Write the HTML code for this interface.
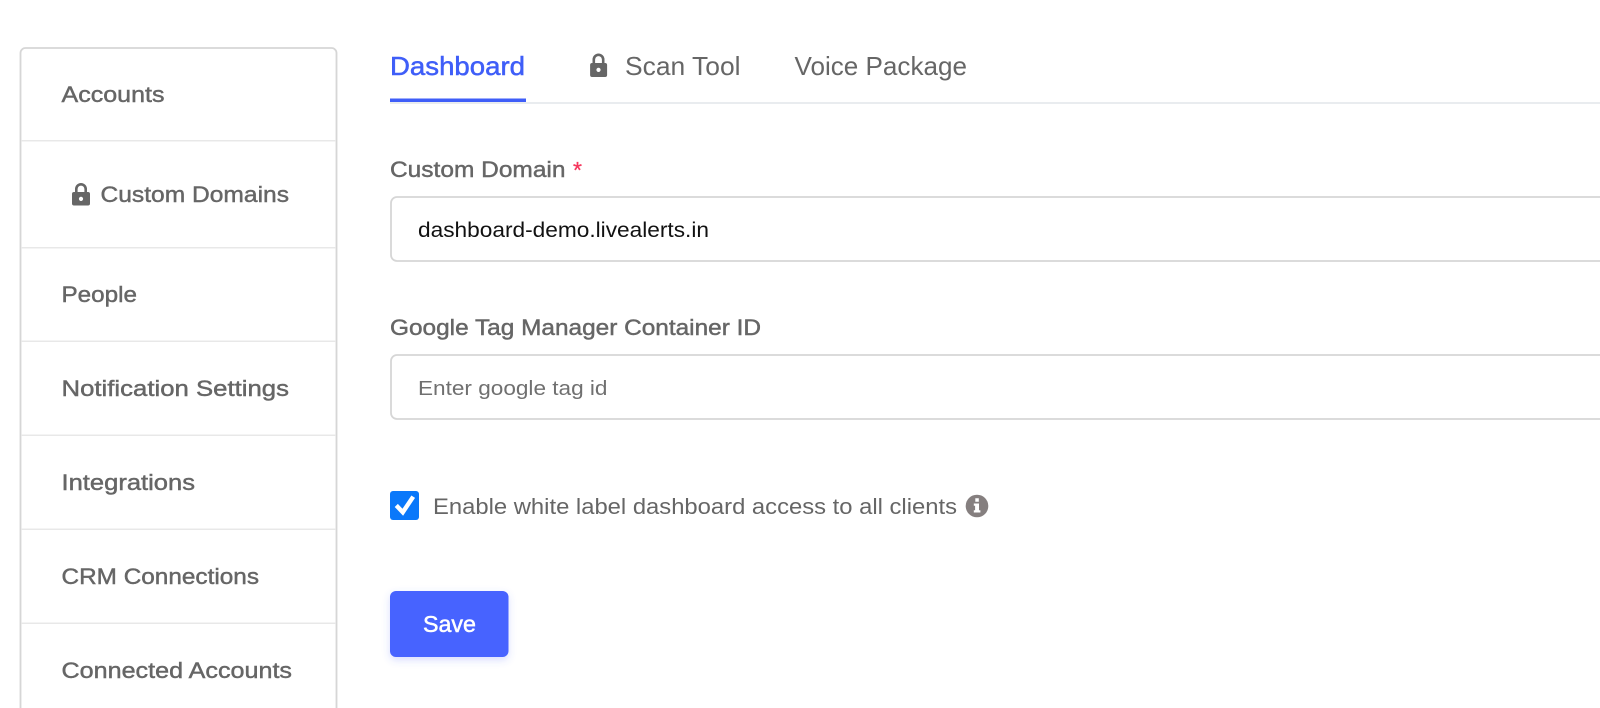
<!DOCTYPE html>
<html lang="en">
<head>
<meta charset="utf-8">
<title>Settings</title>
<style>
html,body{margin:0;padding:0;background:#fff;width:1600px;height:708px;overflow:hidden}
svg{display:block;font-family:"Liberation Sans",sans-serif}
.m{fill:#666;font-size:22.5px;stroke:#666;stroke-width:.45px}
.t{fill:#666;font-size:26px}
.l{fill:#666;font-size:22.5px;stroke:#666;stroke-width:.45px}
</style>
</head>
<body>
<svg width="1600" height="708" viewBox="0 0 1600 708" xmlns="http://www.w3.org/2000/svg">
<!-- sidebar card -->
<path d="M20.500 720V53a5 5 0 0 1 5-5h306a5 5 0 0 1 5 5V720" fill="#fff" stroke="#d6d6d6" stroke-width="1.800"/>
<g fill="#e8e8e8">
<rect x="21" y="140" width="315" height="1.500"/>
<rect x="21" y="247" width="315" height="1.500"/>
<rect x="21" y="340.500" width="315" height="1.500"/>
<rect x="21" y="434.500" width="315" height="1.500"/>
<rect x="21" y="528.500" width="315" height="1.500"/>
<rect x="21" y="622.500" width="315" height="1.500"/>
</g>
<text class="m" x="61.500" y="102" textLength="103" lengthAdjust="spacingAndGlyphs">Accounts</text>
<path fill="#666" fill-rule="evenodd" d="M75 192v-3a6 6 0 0 1 12 0v3h1a2 2 0 0 1 2 2v9.500a2 2 0 0 1-2 2H74a2 2 0 0 1-2-2V194a2 2 0 0 1 2-2zm2.600 0h6.800v-3a3.400 3.400 0 0 0-6.800 0zM81 196.800a2.100 2.100 0 1 0 0 4.200 2.100 2.100 0 0 0 0-4.200z"/>
<text class="m" x="100.500" y="202" textLength="188.500" lengthAdjust="spacingAndGlyphs">Custom Domains</text>
<text class="m" x="61.500" y="302" textLength="75.500" lengthAdjust="spacingAndGlyphs">People</text>
<text class="m" x="61.500" y="396" textLength="227.500" lengthAdjust="spacingAndGlyphs">Notification Settings</text>
<text class="m" x="61.500" y="490" textLength="133.500" lengthAdjust="spacingAndGlyphs">Integrations</text>
<text class="m" x="61.500" y="584" textLength="197.500" lengthAdjust="spacingAndGlyphs">CRM Connections</text>
<text class="m" x="61.500" y="678" textLength="230.500" lengthAdjust="spacingAndGlyphs">Connected Accounts</text>

<!-- tabs -->
<rect x="390" y="102" width="1210" height="2" fill="#e9ecef"/>
<rect x="390" y="98.500" width="136" height="3.500" fill="#3f5ef8"/>
<text x="390" y="75" font-size="26" fill="#3f5ef8" stroke="#3f5ef8" stroke-width=".5" textLength="135" lengthAdjust="spacingAndGlyphs">Dashboard</text>
<path fill="#666" fill-rule="evenodd" d="M592.500 63v-3.500a6 6 0 0 1 12 0V63h.6a2 2 0 0 1 2 2v10a2 2 0 0 1-2 2h-13a2 2 0 0 1-2-2V65a2 2 0 0 1 2-2zm2.600 0h6.800v-3.500a3.400 3.400 0 0 0-6.800 0zm3.400 4.800a2.100 2.100 0 1 0 0 4.200 2.100 2.100 0 0 0 0-4.200z"/>
<text class="t" x="625" y="75" textLength="115.500" lengthAdjust="spacingAndGlyphs">Scan Tool</text>
<text class="t" x="794.500" y="75" textLength="172.500" lengthAdjust="spacingAndGlyphs">Voice Package</text>

<!-- custom domain -->
<text class="l" x="390" y="177" textLength="175.500" lengthAdjust="spacingAndGlyphs">Custom Domain</text>
<text x="573" y="178" font-size="23" fill="#f5365c" stroke="#f5365c" stroke-width=".3">*</text>
<rect x="391" y="197" width="1240" height="64" rx="6" fill="#fff" stroke="#d6d6d6" stroke-width="1.800"/>
<text x="418" y="237" font-size="21.500" fill="#111" textLength="291" lengthAdjust="spacingAndGlyphs">dashboard-demo.livealerts.in</text>

<!-- gtm -->
<text class="l" x="390" y="335" textLength="371" lengthAdjust="spacingAndGlyphs">Google Tag Manager Container ID</text>
<rect x="391" y="355" width="1240" height="64" rx="6" fill="#fff" stroke="#d6d6d6" stroke-width="1.800"/>
<text x="418" y="395" font-size="20.500" fill="#707070" textLength="189.500" lengthAdjust="spacingAndGlyphs">Enter google tag id</text>

<!-- checkbox -->
<rect x="390" y="491" width="29" height="29" rx="3" fill="#0a78fa"/>
<path d="M397.800 507l5 5.200 9.200-13.700" fill="none" stroke="#fff" stroke-width="4.400" stroke-linecap="square" stroke-linejoin="miter"/>
<text x="433" y="514" font-size="22" fill="#666" textLength="524" lengthAdjust="spacingAndGlyphs">Enable white label dashboard access to all clients</text>
<circle cx="977" cy="506" r="11.300" fill="#857f7f"/>
<path fill="#fff" d="M975.300 498.300h3.500v3.400h-3.500zM973.800 503.500h5.200v6.700h1.400v2.300h-6.600v-2.300h1.300v-4.400h-1.300z"/>

<!-- save -->
<defs><filter id="s" x="-20%" y="-20%" width="140%" height="150%"><feDropShadow dx="0" dy="3" stdDeviation="4" flood-color="#4763ff" flood-opacity=".22"/></filter></defs>
<rect x="390" y="591" width="118.500" height="66" rx="6" fill="#4763ff" filter="url(#s)"/>
<text x="423" y="632" font-size="23" fill="#fff" stroke="#fff" stroke-width=".5" textLength="53" lengthAdjust="spacingAndGlyphs">Save</text>
</svg>
</body>
</html>
